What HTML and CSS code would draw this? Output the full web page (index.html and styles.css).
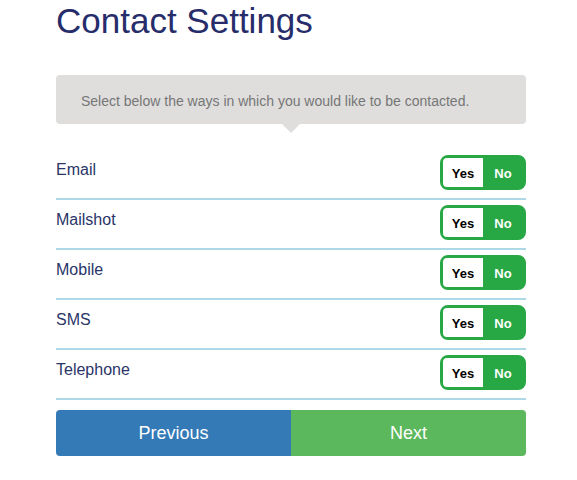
FILE: index.html
```html
<!DOCTYPE html>
<html>
<head>
<meta charset="utf-8">
<link rel="stylesheet" href="styles.css">
</head>
<body>
<div class="page">
  <h1 class="title">Contact Settings</h1>
  <div class="callout">Select below the ways in which you would like to be contacted.</div>
  <div class="rows">
    <div class="row"><span class="label">Email</span><div class="toggle"><span class="yes">Yes</span><span class="no">No</span></div></div>
    <div class="row"><span class="label">Mailshot</span><div class="toggle"><span class="yes">Yes</span><span class="no">No</span></div></div>
    <div class="row"><span class="label">Mobile</span><div class="toggle"><span class="yes">Yes</span><span class="no">No</span></div></div>
    <div class="row"><span class="label">SMS</span><div class="toggle"><span class="yes">Yes</span><span class="no">No</span></div></div>
    <div class="row"><span class="label">Telephone</span><div class="toggle"><span class="yes">Yes</span><span class="no">No</span></div></div>
  </div>
  <div class="buttons">
    <button class="btn prev">Previous</button>
    <button class="btn next">Next</button>
  </div>
</div>
</body>
</html>
```
FILE: styles.css
```css
html, body {
  margin: 0;
  padding: 0;
  background: #fff;
  font-family: "Liberation Sans", Arial, sans-serif;
}
.page {
  width: 470px;
  margin-left: 56px;
}
.title {
  margin: 1px 0 0;
  font-size: 35px;
  line-height: 40px;
  font-weight: normal;
  color: #272c6b;
}
.callout {
  position: relative;
  margin-top: 34px;
  height: 49px;
  box-sizing: border-box;
  background: #dfdedd;
  border-radius: 4px;
  padding-left: 25px;
  padding-top: 2px;
  display: flex;
  align-items: center;
  font-size: 14px;
  color: #767676;
}
.callout::after {
  content: "";
  position: absolute;
  left: 226px;
  top: 49px;
  border-left: 9px solid transparent;
  border-right: 9px solid transparent;
  border-top: 9px solid #dfdedd;
}
.rows {
  margin-top: 26px;
}
.row {
  display: flex;
  justify-content: space-between;
  align-items: flex-start;
  padding: 5px 0 0;
  height: 43px;
  border-bottom: 2px solid #add8e6;
}
.label {
  padding-top: 6px;
  font-size: 16px;
  line-height: 18px;
  color: #2a3568;
}
.toggle {
  display: flex;
  width: 86px;
  height: 35px;
  box-sizing: border-box;
  border: 3px solid #28a745;
  border-radius: 8px;
  background: #28a745;
  font-weight: bold;
  font-size: 13px;
}
.yes, .no {
  display: flex;
  align-items: center;
  justify-content: center;
  width: 40px;
  padding-top: 1px;
}
.yes {
  background: #fff;
  color: #000;
  border-radius: 4px 0 0 4px;
}
.no {
  color: #fff;
}
.buttons {
  display: flex;
  margin-top: 10px;
}
.btn {
  flex: 1;
  height: 46px;
  border: none;
  margin: 0;
  font-family: "Liberation Sans", Arial, sans-serif;
  font-size: 18px;
  color: #fff;
  cursor: pointer;
}
.prev {
  background: #337ab7;
  border-radius: 4px 0 0 4px;
}
.next {
  background: #5cb85c;
  border-radius: 0 4px 4px 0;
}
```
